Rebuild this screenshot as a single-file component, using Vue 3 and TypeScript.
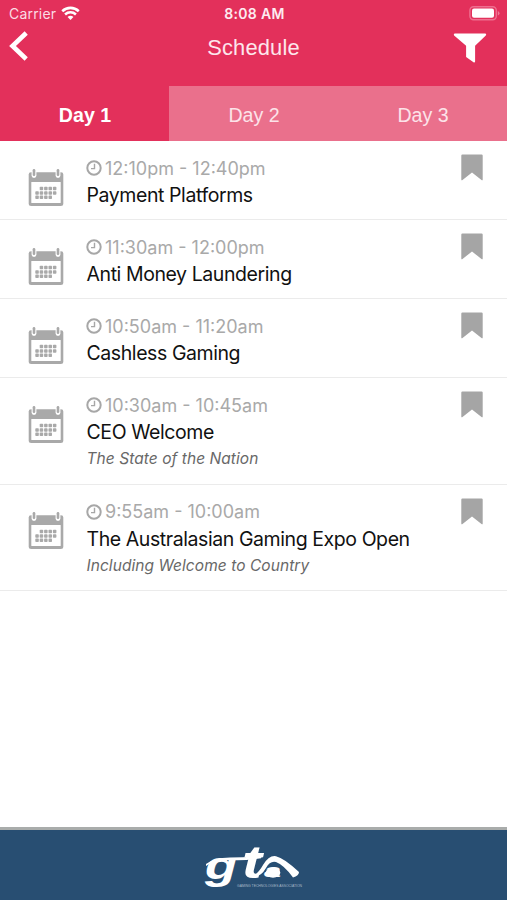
<script setup lang="ts">
interface Session {
  id: number
  time: string
  title: string
  note?: string
}

const days: string[] = ['Day 1', 'Day 2', 'Day 3']
const activeDay = 'Day 1'

const sessions: Session[] = [
  { id: 1, time: '12:10pm - 12:40pm', title: 'Payment Platforms' },
  { id: 2, time: '11:30am - 12:00pm', title: 'Anti Money Laundering' },
  { id: 3, time: '10:50am - 11:20am', title: 'Cashless Gaming' },
  { id: 4, time: '10:30am - 10:45am', title: 'CEO Welcome', note: 'The State of the Nation' },
  { id: 5, time: '9:55am - 10:00am', title: 'The Australasian Gaming Expo Open', note: 'Including Welcome to Country' },
]

// Day cells of the small calendar: the first row starts one column in, the last ends one early
const cells: { x: number; y: number }[] = []
for (let row = 0; row < 3; row++) {
  for (let col = 0; col < 5; col++) {
    if ((row === 0 && col === 0) || (row === 2 && col === 4)) continue
    cells.push({ x: 7.3 + col * 4.4, y: 17.8 + row * 4.4 })
  }
}
</script>

<template>
  <div class="screen">
    <header class="header">
      <div class="status">
        <div class="carrier">
          <span>Carrier</span>
          <svg width="19" height="15" viewBox="0 0 20 15" fill="none" stroke="#fff" stroke-width="2.7">
            <path d="M1.3 5.1C6.3.4 13.7.4 18.7 5.1" />
            <path d="M4.3 8.5c3.3-3 8.1-3 11.4 0" />
            <path d="M6.9 11.1Q10 8.6 13.1 11.1L10 14.3z" fill="#fff" stroke="none" />
          </svg>
        </div>
        <div class="clock">8:08 AM</div>
        <svg class="battery" width="31" height="15" viewBox="0 0 31 15">
          <rect x=".9" y=".7" width="26.4" height="13" rx="3.6" fill="none" stroke="#ee6f8f" stroke-width="1.4" />
          <rect x="3" y="2.6" width="22" height="9.2" rx="2" fill="#fff" />
          <path d="M28.8 5v4.6q1.7-.7 1.7-2.3T28.8 5z" fill="#ee7a98" />
        </svg>
      </div>
      <div class="nav">
        <svg width="20" height="30" viewBox="0 0 20 30" fill="none" stroke="#fff" stroke-width="4.6">
          <path d="M18.2 2 4.5 15l13.700 13" />
        </svg>
        <h1>Schedule</h1>
        <svg class="filter" width="34" height="30" viewBox="0 0 34 30" fill="#fff">
          <path d="M1.6.4h30.8q1.5.6.4 2L22.100 12.800v15.800q-.3 1.400-1.600.7l-7.400-5.400V12.800L1.100 2.400Q.2 1 1.600.4z" />
        </svg>
      </div>
      <nav class="tabs">
        <button v-for="day in days" :key="day" :class="['tab', { active: day === activeDay }]">{{ day }}</button>
      </nav>
    </header>

    <main>
      <article v-for="s in sessions" :key="s.id" :class="['row', { tall: s.note }]">
        <svg class="calendar" width="36" height="38" viewBox="0 0 36 38">
          <path d="M3 3.200h30q2.300 0 2.300 2.300v29q0 2.500-2.500 2.500H3.200Q.7 37 .7 34.500v-29Q.7 3.200 3 3.200z" fill="#a9a9a9" />
          <rect x="3.300" y="13" width="29.400" height="21" rx=".6" fill="#fff" />
          <rect x="3.600" y="0" width="4.800" height="9" rx="2.400" fill="#fff" />
          <rect x="27.600" y="0" width="4.800" height="9" rx="2.400" fill="#fff" />
          <rect x="4.700" y="0" width="2.600" height="7" rx="1.300" fill="#a9a9a9" />
          <rect x="28.700" y="0" width="2.600" height="7" rx="1.300" fill="#a9a9a9" />
          <rect v-for="(c, i) in cells" :key="i" :x="c.x" :y="c.y" width="3.500" height="3.500" rx=".8" fill="#a9a9a9" />
        </svg>
        <div class="body">
          <div class="time">
            <svg width="16" height="16" viewBox="0 0 16 16" fill="none" stroke="#a7a7a7">
              <circle cx="8" cy="8" r="6.700" stroke-width="2" />
              <path d="M8.500 3.700v4.900H5" stroke-width="1.400" />
            </svg>
            <span>{{ s.time }}</span>
          </div>
          <h2>{{ s.title }}</h2>
          <p v-if="s.note">{{ s.note }}</p>
        </div>
        <svg class="bookmark" width="22" height="27" viewBox="0 0 22 27" fill="#a5a5a5">
          <path d="M1.500.4h19q1.200 0 1.200 1.200v23.800q0 1.300-1.200.7L11 18.400l-9.500 7.700q-1.200.6-1.200-.7V1.600Q.3.400 1.500.4z" />
        </svg>
      </article>
    </main>

    <footer class="footer">
      <svg width="120" height="70" viewBox="0 0 120 70" fill="#fff">
        <text class="mark" x="10" y="48.500" textLength="32" lengthAdjust="spacingAndGlyphs">g</text>
        <text class="mark stem" x="47" y="47.500" textLength="20" lengthAdjust="spacingAndGlyphs">t</text>
        <text class="mark round" x="69" y="47" textLength="17" lengthAdjust="spacingAndGlyphs">a</text>
        <path d="M11 34Q19 27.500 35 27.500Q50 27.500 67 26L66 28.300Q49 31 34 30Q19 29.500 11 36z" />
        <path d="M57 46.500Q63 44 68 35Q74 25 81 26.200Q89 28 104 42Q104 45.500 98 47.500Q89 35 81 32Q75 30.500 71 38Q66 47 57 47.500z" />
        <ellipse cx="78" cy="42.700" rx="7.300" ry="5" />
        <text class="caption" x="42" y="56.700" textLength="65" lengthAdjust="spacingAndGlyphs">GAMING TECHNOLOGIES ASSOCIATION</text>
      </svg>
    </footer>
  </div>
</template>

<style>
body {
  margin: 0;
  background: #fff;
}
</style>

<style scoped>
.screen {
  width: 507px;
  height: 900px;
  display: flex;
  flex-direction: column;
  overflow: hidden;
  background: #fff;
  font-family: Inter, "Liberation Sans", sans-serif;
}
.header {
  height: 141px;
  flex: none;
  display: flex;
  flex-direction: column;
  background: #e3305b;
  color: #fff;
}
.status {
  height: 27px;
  display: grid;
  grid-template-columns: 1fr 1fr 1fr;
  align-items: center;
  box-sizing: border-box;
  padding: 0 7px 0 9px;
  font-size: 14px;
}
.carrier {
  display: flex;
  align-items: center;
  gap: 5px;
  letter-spacing: 0.2px;
  color: #fbdce4;
}
.clock {
  text-align: center;
  font-weight: 600;
  font-size: 14px;
  letter-spacing: 0.35px;
  color: #fdebf0;
}
.battery {
  justify-self: end;
}
.nav {
  height: 59px;
  display: grid;
  grid-template-columns: 1fr auto 1fr;
  align-items: start;
  box-sizing: border-box;
  padding: 4px 20px 0 8px;
}
h1 {
  margin: 4px 0 0 12px;
  font: 400 21.900px/26px "Liberation Sans", sans-serif;
  letter-spacing: 0.15px;
  color: #fde6ec;
}
.filter {
  justify-self: end;
  margin-top: 2px;
}
.tabs {
  flex: 1;
  display: grid;
  grid-template-columns: repeat(3, 1fr);
}
.tab {
  border: 0;
  padding: 4px 0 0 1px;
  background: #ea708c;
  color: #fce3e9;
  font: 400 19.600px "Liberation Sans", sans-serif;
}
.tab.active {
  background: #e3305b;
  color: #fff;
  font-weight: 700;
}
main {
  flex: 1;
}
.row {
  height: 79px;
  box-sizing: border-box;
  display: grid;
  grid-template-columns: 58.500px 1fr 22px;
  align-items: start;
  padding: 0 24px 0 28px;
  border-bottom: 1.500px solid #ebebeb;
}
.row.tall {
  height: 106.500px;
}
.calendar {
  margin-top: 27.500px;
}
.body {
  padding-top: 14px;
}
.time {
  display: flex;
  align-items: center;
  gap: 3px;
  height: 26px;
  font-size: 18px;
  color: #a9a9a9;
  white-space: nowrap;
}
.time svg {
  margin-left: -0.5px;
}
h2 {
  margin: 0;
  font-size: 19.500px;
  font-weight: 400;
  line-height: 28px;
  letter-spacing: -0.42px;
  color: #111;
  white-space: nowrap;
}
p {
  margin: 0;
  font-size: 15.500px;
  font-style: italic;
  line-height: 26px;
  letter-spacing: 0.06px;
  color: #686868;
}
.bookmark {
  margin-top: 13px;
}
.footer {
  height: 73px;
  flex: none;
  display: flex;
  justify-content: center;
  box-sizing: border-box;
  padding-left: 3px;
  border-top: 3px solid #a9acab;
  background: #284e72;
}
.mark {
  font: italic 700 39px "Liberation Sans", sans-serif;
}
.mark.stem {
  font-size: 46px;
}
.mark.round {
  font-size: 18px;
}
.caption {
  font: 3.500px "Liberation Sans", sans-serif;
  fill: #a9bac9;
}
</style>
